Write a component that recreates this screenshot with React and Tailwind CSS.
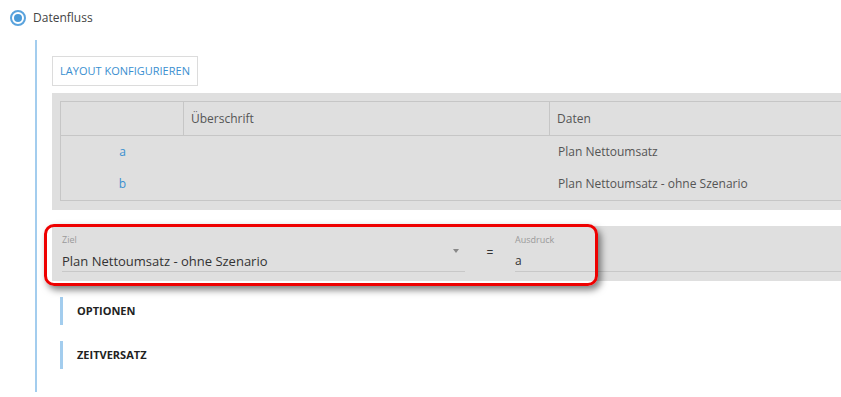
export default function App() {
  return (
    <div className="w-[841px] h-[397px] overflow-hidden bg-white text-[#444]" style={{ fontFamily: '"Open Sans", "Liberation Sans", sans-serif' }}>
      <div className="flex items-center pl-[10px] pt-[10px] h-[26px] gap-[7px]">
        <div className="w-[16px] h-[16px] rounded-full border-2 border-[#5aa3dd] flex items-center justify-center">
          <div className="w-[8px] h-[8px] rounded-full bg-[#4a9ad8]" />
        </div>
        <span className="text-[12px] text-[#444] leading-none">Datenfluss</span>
      </div>
      <div className="ml-[35px] mt-[14px] border-l-2 border-[#a3cdee] pl-[15px] h-[352px]">
        <div className="pt-[16px]">
          <div className="w-[146px] h-[30px] border border-[#dcdcdc] flex items-center justify-center text-[11px] text-[#3a8fd0] font-medium">
            LAYOUT KONFIGURIEREN
          </div>
        </div>
        <div className="mt-[7px] bg-[#dfdfdf] pt-[8px] pl-[8px] pb-[9px] w-[800px]">
          <div className="border-l border-t border-b border-[#c6c6c6] text-[12px] text-[#555]">
            <div className="flex h-[34px] border-b border-[#c6c6c6]">
              <div className="w-[123px] border-r border-[#c6c6c6]" />
              <div className="w-[366px] border-r border-[#c6c6c6] flex items-center pl-[7px]">Überschrift</div>
              <div className="flex-1 flex items-center pl-[7px]">Daten</div>
            </div>
            <div className="flex h-[32px] items-center">
              <div className="w-[123px] text-center text-[#3a8fd0]">a</div>
              <div className="w-[366px]" />
              <div className="flex-1 pl-[8px]">Plan Nettoumsatz</div>
            </div>
            <div className="flex h-[32px] items-center">
              <div className="w-[123px] text-center text-[#3a8fd0]">b</div>
              <div className="w-[366px]" />
              <div className="flex-1 pl-[8px]">Plan Nettoumsatz - ohne Szenario</div>
            </div>
          </div>
        </div>
        <div className="relative mt-[16px] bg-[#dfdfdf] h-[55px] w-[800px] flex">
          <div className="ml-[10px] w-[403px] pt-[9px] border-b border-[#c8c8c8] h-[46px] relative">
            <div className="text-[9px] leading-[10px] text-[#9a9a9a]">Ziel</div>
            <div className="text-[13px] leading-[18px] mt-[7px] text-[#333]">Plan Nettoumsatz - ohne Szenario</div>
            <div className="absolute right-[6px] top-[23px] w-0 h-0 border-l-[3px] border-r-[3px] border-t-[4px] border-l-transparent border-r-transparent border-t-[#888]" />
          </div>
          <div className="w-[50px] text-center text-[12px] pt-[18px] text-[#333]">=</div>
          <div className="flex-1 pt-[9px] border-b border-[#c8c8c8] h-[46px]">
            <div className="text-[9px] leading-[10px] text-[#9a9a9a]">Ausdruck</div>
            <div className="text-[12px] leading-[18px] mt-[7px] text-[#333]">a</div>
          </div>
          <div className="absolute left-[-8px] top-[-2px] w-[554px] h-[62px] rounded-[10px] border-[3px] border-[#ee0000] shadow-[3px_4px_7px_rgba(0,0,0,0.5)]" />
        </div>
        <div className="mt-[16px] ml-[8px] border-l-[3px] border-[#a3cdee] h-[28px] flex items-center pl-[14px] text-[11px] font-bold text-[#222]">OPTIONEN</div>
        <div className="mt-[16px] ml-[8px] border-l-[3px] border-[#a3cdee] h-[28px] flex items-center pl-[14px] text-[11px] font-bold text-[#222]">ZEITVERSATZ</div>
      </div>
    </div>
  );
}
